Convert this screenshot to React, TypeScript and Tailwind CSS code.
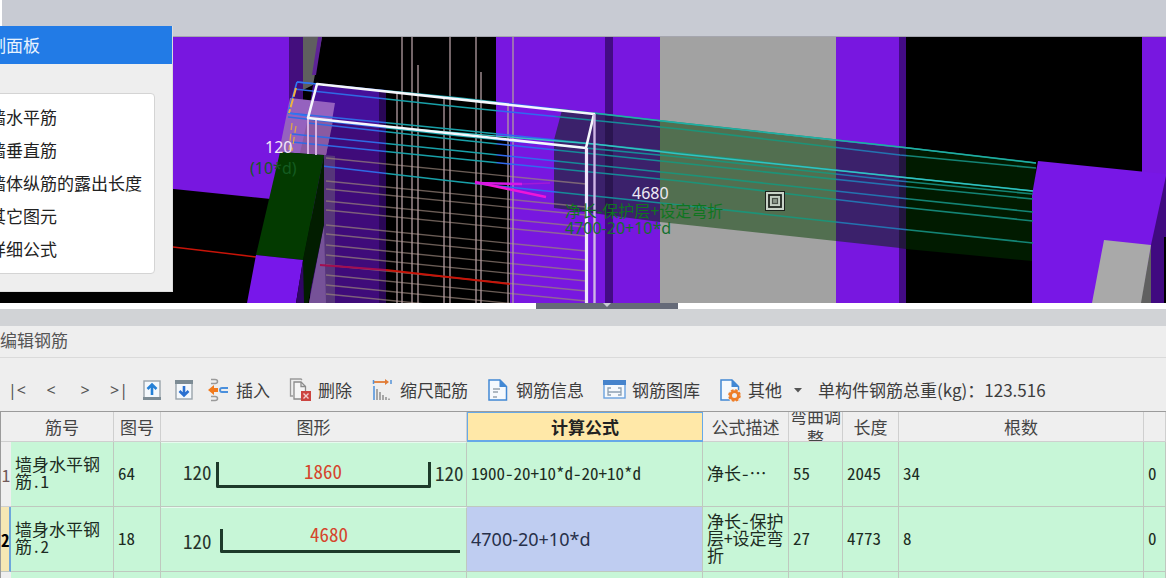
import { useState } from "react";
import type { ReactNode } from "react";

interface RebarRow {
  id: number;
  name: string;
  shapeNo: string;
  formula: string;
  description: string;
  bend: string;
  length: string;
  count: string;
  lap: string;
}

const ROWS: RebarRow[] = [
  {
    id: 1,
    name: "墙身水平钢筋.1",
    shapeNo: "64",
    formula: "1900-20+10*d-20+10*d",
    description: "净长-…",
    bend: "55",
    length: "2045",
    count: "34",
    lap: "0",
  },
  {
    id: 2,
    name: "墙身水平钢筋.2",
    shapeNo: "18",
    formula: "4700-20+10*d",
    description: "净长-保护层+设定弯折",
    bend: "27",
    length: "4773",
    count: "8",
    lap: "0",
  },
];

const PANEL_OPTIONS = [
  "墙水平筋",
  "墙垂直筋",
  "墙体纵筋的露出长度",
  "其它图元",
  "详细公式",
];

// 钢筋线，从左到右穿过墙体和梁
const REBAR_LINES = [
  "297,82 460,98 680,123 900,147 1036,163",
  "294,89 460,107 680,129 900,155 1036,168",
  "288,113 460,130 680,153 900,177 1033,191",
  "288,117 460,136 680,157 900,181 1033,194",
  "308,123 460,140 680,163 900,186 1033,199",
  "292,134 460,151 680,174 900,198 1033,212",
  "292,142 460,159 680,181 900,207 1033,221",
  "322,166 460,182 680,205 900,229 1033,243",
];

const MESH_Y = [
  159, 182, 190, 202, 211, 226, 235, 246, 256, 266, 276, 286, 295,
];

const MESH_X = [
  [397, 92],
  [402, 37],
  [412, 37],
  [418, 65],
  [444, 96],
  [450, 37],
  [476, 37],
  [481, 72],
  [508, 103],
  [513, 37],
];

function Scene() {
  return (
    <svg
      className="block h-[266px] w-full bg-black"
      viewBox="0 37 1166 266"
      preserveAspectRatio="xMinYMin slice"
      role="img"
      aria-label="三维视图"
    >
      <defs>
        <linearGradient
          id="rebar"
          gradientUnits="userSpaceOnUse"
          x1="0"
          y1="0"
          x2="1166"
          y2="0"
        >
          <stop offset="0.33" stopColor="#2f6ae4" />
          <stop offset="0.332" stopColor="#18a0a8" />
          <stop offset="0.425" stopColor="#18a0a8" />
          <stop offset="0.427" stopColor="#2f6af0" />
          <stop offset="0.475" stopColor="#2f6af0" />
          <stop offset="0.48" stopColor="#168a98" />
          <stop offset="0.565" stopColor="#168a98" />
          <stop offset="0.567" stopColor="#1c9378" />
          <stop offset="0.716" stopColor="#1c9378" />
          <stop offset="0.718" stopColor="#2373b0" />
          <stop offset="0.777" stopColor="#2373b0" />
          <stop offset="0.779" stopColor="#138475" />
        </linearGradient>
      </defs>

      {/* 左侧墙 */}
      <polygon points="0,37 290,37 290,201 0,171" fill="#7817e0" />
      <rect x="289" y="37" width="14" height="70" fill="#430e7d" />
      <polygon points="303,37 322,37 313,85 303,90" fill="#5f5f5f" />
      <polygon points="318,37 322,37 316,75 312,75" fill="#5e2396" />

      {/* 柱与梁 */}
      <polygon points="496,37 660,37 660,303 510,303 510,137 496,137" fill="#7817e0" />
      <rect x="605" y="37" width="8" height="266" fill="#430b85" />
      <rect x="660" y="37" width="176" height="266" fill="#a2a2a2" />
      <rect x="836" y="37" width="64" height="266" fill="#7817e0" />
      <rect x="899" y="37" width="7" height="266" fill="#430b85" />
      <polygon points="562,110 660,121 660,222 554,208 554,140" fill="#3b216b" />
      <polygon points="605,115 613,116 613,216 605,215" fill="#2a1550" />
      <polygon points="660,121 836,141 836,241 660,222" fill="#526f50" />
      <polygon points="836,141 900,148 900,248 836,241" fill="#3b216b" />
      <polygon points="899,148 906,149 906,249 899,248" fill="#231640" />
      <polygon points="906,149 1036,163 1032,261 906,249" fill="#011b00" />

      {/* 右侧柱 */}
      <rect x="1142" y="37" width="24" height="140" fill="#7817e0" />
      <polygon points="1038,161 1166,174 1166,303 1032,303 1032,195" fill="#7817e6" />
      <polygon points="1166,176 1151,245 1151,303 1166,303" fill="#400a80" />
      <polygon points="1151,245 1151,303 1140,303" fill="#606060" />
      <polygon points="1104,240 1151,245 1141,303 1092,303" fill="#a9a9a9" />
      <rect x="1164" y="237" width="2" height="66" fill="#000" />

      {/* 选中墙体 */}
      <polygon points="313,85 386,92 386,303 310,303" fill="#3f0b7a" />
      <polygon points="313,85 386,92 386,125 308,118" fill="#46109a" />
      <rect x="379" y="92" width="7" height="211" fill="#2a0757" />
      <polygon points="324,155 335,156 335,303 309,303 324,225" fill="#56357a" />
      <polygon points="324,225 326,303 309,303" fill="#765298" />
      <polygon points="290,98 335,103 326,155 279,152" fill="#9562bf" />
      <polygon points="308,118 333,121 326,155 300,153" fill="#8a5aa2" />

      {MESH_Y.map((y) => (
        <line
          key={y}
          x1="326"
          y1={y - 1}
          x2="586"
          y2={y + 25}
          stroke="#98857a"
          strokeOpacity="0.7"
          strokeWidth="1.4"
        />
      ))}
      {MESH_X.map(([x, top]) => (
        <line
          key={x}
          x1={x}
          y1={top}
          x2={x}
          y2="303"
          stroke="#b09ba0"
          strokeOpacity="0.66"
          strokeWidth="2"
        />
      ))}

      <polyline points="173,247 257,257" stroke="#c81408" strokeWidth="1.5" fill="none" />
      <polyline points="320,265 386,270" stroke="#a30d50" strokeWidth="1.8" fill="none" />
      <polyline points="386,270 510,284" stroke="#c81408" strokeWidth="1.8" fill="none" />

      {REBAR_LINES.map((points) => (
        <polyline
          key={points}
          points={points}
          fill="none"
          stroke="url(#rebar)"
          strokeWidth="1.6"
        />
      ))}
      <polyline points="594,113 680,123 900,147 1036,163" fill="none" stroke="#20b0a5" strokeWidth="1.4" />
      <polyline points="386,127 594,144 680,154 900,177 1033,191" fill="none" stroke="#32c3c3" strokeWidth="1.4" />

      {/* 绿色端柱 */}
      <polygon points="324,155 324,225 308,303 300,303 303,260" fill="#021d00" />
      <polygon points="280,152 324,155 303,260 256,255" fill="#033a00" />
      <polygon points="256,255 303,260 296,303 247,303" fill="#7817ea" />
      <polygon points="303,260 304,303 296,303" fill="#300664" />

      <path d="M297 82 288 113 M297 82 317 84 M288 113 308 116" stroke="#2f78f2" strokeWidth="1.6" fill="none" />
      <path d="M296 88 289 113" stroke="#f2b13f" strokeWidth="2" strokeDasharray="9 2" />
      <path d="M292 123 289 150 M296 126 292 151" stroke="#dba74e" strokeWidth="1.3" strokeDasharray="7 4" fill="none" />
      <path d="M308 118V154M316 119V155" stroke="#d7b4e4" strokeWidth="2" />

      {/* 白色选框 */}
      <polygon points="317,84 594,114 586,148 308,118" fill="none" stroke="#f5f7fc" strokeWidth="2.6" strokeLinejoin="round" />
      <path d="M586.5 148V303" stroke="#f0e6fc" strokeWidth="3.2" />
      <path d="M594.5 114V303" stroke="#cfb5e6" strokeWidth="2.4" />
      <path d="M475 182 546 197" stroke="#ee16d8" strokeWidth="2.6" />
      <path d="M475 183 522 184" stroke="#d718e6" strokeWidth="2.6" />
      <path d="M522 184 550 183" stroke="#a11ad8" strokeWidth="1.4" />

      <g fontFamily="'Noto Sans', 'Noto Sans CJK SC', sans-serif" fontSize="16">
        <text x="265" y="153" fill="#f2e9f8">120</text>
        <text x="250" y="174" fill="#145c20">(10*d)</text>
        <text x="632" y="199" fill="#eeeaf4">4680</text>
        <text x="565" y="217" fill="#0f761f">净长-保护层+设定弯折</text>
        <text x="565" y="234" fill="#14702c">4700-20+10*d</text>
      </g>

      {/* 捕捉光标 */}
      <rect x="765.5" y="191.5" width="19" height="19" fill="#c9d3c8" stroke="#1c221c" />
      <rect x="769" y="195" width="12" height="12" fill="#c3cec2" stroke="#202620" strokeWidth="1.8" />
      <rect x="772.5" y="198.5" width="5" height="5" fill="#8b978a" stroke="#4a524a" strokeWidth="1.2" />
    </svg>
  );
}

function DisplayPanel() {
  return (
    <section className="absolute -left-10 top-[26px] w-[213px] border-b border-r border-[#dcdcdc] bg-[#eeeeee] pb-[17px]">
      <h2 className="flex h-[38px] items-center bg-[#227be6] pl-[29px] text-[17px] text-[#e8f3ff]">
        制面板
      </h2>
      <div className="ml-1 mr-[17px] mt-[29px] rounded-[4px] border border-[#d4d4d4] bg-white pb-2 pl-[5px] pt-1.5">
        {PANEL_OPTIONS.map((label) => (
          <label
            key={label}
            className="flex h-[33px] items-center gap-1.5 whitespace-nowrap text-[17px] text-[#222222]"
          >
            <input type="checkbox" defaultChecked className="size-[13px]" />
            {label}
          </label>
        ))}
      </div>
    </section>
  );
}

function ArrowBoxIcon({ down = false }: { down?: boolean }) {
  return (
    <svg className="h-5 w-[18px]" viewBox="0 0 18 20" fill="none">
      <rect x="1" y="1" width="16" height="18" fill="#f4f8fc" stroke="#9aa4ac" strokeWidth="1.4" />
      {down ? (
        <>
          <path d="M0 0H18V4H0Z" fill="#7c8b94" />
          <path d="M9 6V15M4.500 11 9 15.500 13.500 11" stroke="#2a70d0" strokeWidth="2.600" />
        </>
      ) : (
        <>
          <path d="M0 17H18V20H0Z" fill="#7c8b94" />
          <path d="M9 15V5M4.500 9 9 4.500 13.500 9" stroke="#2580d6" strokeWidth="2.600" />
        </>
      )}
    </svg>
  );
}

function InsertIcon() {
  return (
    <svg className="h-6 w-5" viewBox="0 0 20 24" fill="none">
      <path d="M3 1.500H7Q9.500 1.500 9.500 3.500T7 5.500H3" stroke="#9a9a9a" strokeWidth="1.500" />
      <path d="M3 18.500H7Q9.500 18.500 9.500 20.500T7 22.500H3" stroke="#9a9a9a" strokeWidth="1.500" />
      <path d="M0 12 6 7V10H10V14H6V17Z" fill="#f17a1d" />
      <path d="M20 10H14Q12 10 12 12T14 14H20" stroke="#4a8fdc" strokeWidth="1.800" />
    </svg>
  );
}

function DeleteIcon() {
  return (
    <svg className="h-6 w-5 overflow-visible" viewBox="0 0 20 24" fill="none">
      <path d="M3 18H0.500V1H11L12 2" stroke="#9a9a9a" strokeWidth="1.300" />
      <path d="M4 4H11L15.500 8.500V21H4Z" fill="#f5f5f5" stroke="#8b8b8b" strokeWidth="1.300" />
      <path d="M11 4V8.500H15.500" stroke="#8b8b8b" strokeWidth="1.300" />
      <rect x="11" y="13" width="10" height="10" fill="#cc4440" />
      <path d="M13.500 15.500 18.500 20.500M18.500 15.500 13.500 20.500" stroke="#f1cfce" strokeWidth="1.400" />
    </svg>
  );
}

function ScaleIcon() {
  return (
    <svg className="h-6 w-5" viewBox="0 0 20 24" fill="none">
      <path d="M2 4H15" stroke="#e07b35" strokeWidth="1.800" />
      <path d="M13 1 17 4 13 7Z" fill="#e07b35" />
      <path d="M1.500 2V6M19 2V6" stroke="#5492d8" strokeWidth="1.500" />
      <path d="M2 8V22" stroke="#4a8fdc" strokeWidth="1.500" />
      <path d="M5 11V22M8 14V22M11 17V22M14 19V22M17 20.500V22" stroke="#888888" strokeWidth="1.400" />
    </svg>
  );
}

function DocIcon({ gear = false }: { gear?: boolean }) {
  return (
    <svg className="h-6 w-5 overflow-visible" viewBox="0 0 20 24" fill="none">
      <path d="M1 2H12L18.500 8.500V22H1Z" fill="#f5f9fd" stroke="#4288d4" strokeWidth="1.500" />
      <path d="M11.500 1.500 19 9H11.500Z" fill="#4288d4" />
      {gear ? (
        <>
          <circle cx="14.500" cy="17.500" r="6.800" fill="#eeeeee" />
          <circle cx="14.500" cy="17.500" r="5.500" stroke="#ee7d26" strokeWidth="1.600" strokeDasharray="2.600 1.720" />
          <circle cx="14.500" cy="17.500" r="3.900" stroke="#ee7d26" strokeWidth="2.800" />
        </>
      ) : (
        <path d="M5 11H12M5 14H10M5 19H9" stroke="#96a3ad" strokeWidth="1.300" />
      )}
    </svg>
  );
}

function LibraryIcon() {
  return (
    <svg className="h-6 w-5 overflow-visible" viewBox="0 0 20 24" fill="none">
      <rect x="0" y="3" width="21" height="17" fill="#f5f9fd" stroke="#6aa2de" strokeWidth="1.400" />
      <path d="M-1 2H22V7H-1Z" fill="#4583cc" />
      <path d="M7 10H4V17H7M4 14H17M14 10H17V17H14" stroke="#8da0b2" strokeWidth="1.300" />
    </svg>
  );
}

function ToolButton({ icon, label }: { icon: ReactNode; label: string }) {
  return (
    <button className="flex items-center gap-2 whitespace-nowrap hover:bg-gray-200">
      {icon}
      {label}
    </button>
  );
}

function Toolbar() {
  return (
    <div className="flex h-[53px] items-center pt-2.5 text-[17px] text-[#3d3d3d]">
      {[
        ["首条", "|<"],
        ["上一条", "<"],
        ["下一条", ">"],
        ["末条", ">|"],
      ].map(([title, sign]) => (
        <button
          key={title}
          aria-label={title}
          className="w-[34px] shrink-0 font-['Noto_Sans'] text-[16px] text-[#555555]"
        >
          {sign}
        </button>
      ))}
      <button aria-label="上移" className="flex w-8 shrink-0 justify-center">
        <ArrowBoxIcon />
      </button>
      <button aria-label="下移" className="flex w-8 shrink-0 justify-center">
        <ArrowBoxIcon down />
      </button>
      <div className="ml-2 flex items-center gap-5">
        <ToolButton icon={<InsertIcon />} label="插入" />
        <ToolButton icon={<DeleteIcon />} label="删除" />
        <ToolButton icon={<ScaleIcon />} label="缩尺配筋" />
        <ToolButton icon={<DocIcon />} label="钢筋信息" />
        <ToolButton icon={<LibraryIcon />} label="钢筋图库" />
        <ToolButton icon={<DocIcon gear />} label="其他" />
      </div>
      <svg className="ml-3 h-2 w-2 shrink-0" viewBox="0 0 8 8">
        <path d="M0 2H8L4 6.500Z" fill="#555555" />
      </svg>
      <p className="ml-4 whitespace-nowrap">单构件钢筋总重(kg)：123.516</p>
    </div>
  );
}

function ShapeDrawing({ id }: { id: number }) {
  return (
    <svg
      className="block h-[63px] w-full"
      viewBox="0 0 305 63"
      preserveAspectRatio="xMinYMid meet"
      fontSize="19"
    >
      {id === 1 ? (
        <>
          <path d="M56.500 19V43.500H268.500V19" fill="none" stroke="#1d3a2a" strokeWidth="3" strokeLinejoin="round" />
          <text x="22" y="37" fill="#26332b">120</text>
          <text x="143" y="36" fill="#d5452c">1860</text>
          <text x="274" y="38" fill="#26332b">120</text>
        </>
      ) : (
        <>
          <path d="M60.500 21V43.500H299" fill="none" stroke="#1d3a2a" strokeWidth="3" strokeLinejoin="round" />
          <text x="22" y="41" fill="#26332b">120</text>
          <text x="149" y="34" fill="#d5452c">4680</text>
        </>
      )}
    </svg>
  );
}

const TH = "h-[30px] border-b border-r border-[#cfcfcf] bg-[#efefef] p-0 font-normal";
const TD = "border-b border-r border-[#bfc8bf] bg-[#c7f6d7] pb-1 pl-1 pr-0 pt-0";

function RebarTable() {
  const [formula, setFormula] = useState(ROWS[1].formula);

  return (
    <table className="w-full table-fixed border-separate border-spacing-0 border-l border-t border-[#9b9b9b] text-[17px] leading-[17px] text-[#1c2b22]">
      <colgroup>
        <col className="w-[10px]" />
        <col className="w-[103px]" />
        <col className="w-[47px]" />
        <col className="w-[306px]" />
        <col className="w-[236px]" />
        <col className="w-[86px]" />
        <col className="w-[54px]" />
        <col className="w-[56px]" />
        <col />
        <col className="w-[22px]" />
      </colgroup>
      <thead className="text-[#444444]">
        <tr>
          <th className="border-b border-[#cfcfcf] bg-[#efefef] p-0" />
          <th className={TH}>筋号</th>
          <th className={TH}>图号</th>
          <th className={TH}>图形</th>
          <th className="border border-b-2 border-[#67a9e8] bg-[#ffe8a8] p-0 font-bold text-[#222222]">
            计算公式
          </th>
          <th className={TH}>公式描述</th>
          <th className={TH}>
            <div className="flex h-[29px] items-center overflow-hidden leading-[22px]">
              弯曲调整
            </div>
          </th>
          <th className={TH}>长度</th>
          <th className={TH}>根数</th>
          <th className={TH} />
        </tr>
      </thead>
      <tbody className="[font-feature-settings:'hwid']">
        {ROWS.map((row) => (
          <tr key={row.id} className="h-[65px]">
            {row.id === 2 ? (
              <th className="border-b border-r-2 border-b-[#bfc8bf] border-r-[#6ea6dc] bg-[#f6e7b4] p-0 font-bold text-black">
                2
              </th>
            ) : (
              <th className="border-b border-[#cfcfcf] bg-[#efefef] p-0 font-normal text-[#705a5a]">
                {row.id}
              </th>
            )}
            <td className={`${TD} break-all`}>{row.name}</td>
            <td className={TD}>{row.shapeNo}</td>
            <td className="border-b border-r border-t border-[#bfc8bf] border-t-[#e6fbee] bg-[#c7f6d7] p-0">
              <ShapeDrawing id={row.id} />
            </td>
            {row.id === 2 ? (
              <td className="border-b border-r border-[#bfc8bf] bg-[#bfcdf1] p-0">
                <input
                  aria-label="计算公式"
                  value={formula}
                  onChange={(e) => setFormula(e.target.value)}
                  className="block h-16 w-full bg-transparent pl-1 font-['Noto_Sans'] text-[18px] text-[#27304a] outline-none"
                />
              </td>
            ) : (
              <td className={TD}>{row.formula}</td>
            )}
            <td className={`${TD} break-all`}>{row.description}</td>
            <td className={TD}>{row.bend}</td>
            <td className={TD}>{row.length}</td>
            <td className={TD}>{row.count}</td>
            <td className={TD}>{row.lap}</td>
          </tr>
        ))}
        <tr className="h-[65px]">
          <th className="bg-[#efefef] p-0" />
          {[1, 2, 3, 4, 5, 6, 7, 8, 9].map((i) => (
            <td key={i} className={TD} />
          ))}
        </tr>
      </tbody>
    </table>
  );
}

export default function App() {
  return (
    <div className="h-screen overflow-hidden bg-[#eeeeee] font-['Noto_Sans_CJK_SC',sans-serif]">
      <div className="relative">
        <div className="flex h-[37px] items-start border-b border-[#a5a6ae] bg-[#c8cbd3]">
          <div className="h-[26px] w-0.5 bg-white" />
        </div>
        <Scene />
        <DisplayPanel />
      </div>

      <div className="h-1.5 bg-white">
        <div className="ml-[46%] flex h-full w-[142px] justify-center bg-[#656a78]">
          <svg className="h-1 w-2" viewBox="0 0 8 4">
            <path d="M0 0H8L4 4Z" fill="#c9ccd4" />
          </svg>
        </div>
      </div>
      <div className="h-[17px] bg-[#d1d3d6]" />

      <h2 className="flex h-8 items-center border-b border-[#dadada] pb-1 text-[17px] text-[#555555]">
        编辑钢筋
      </h2>
      <Toolbar />
      <RebarTable />
    </div>
  );
}
